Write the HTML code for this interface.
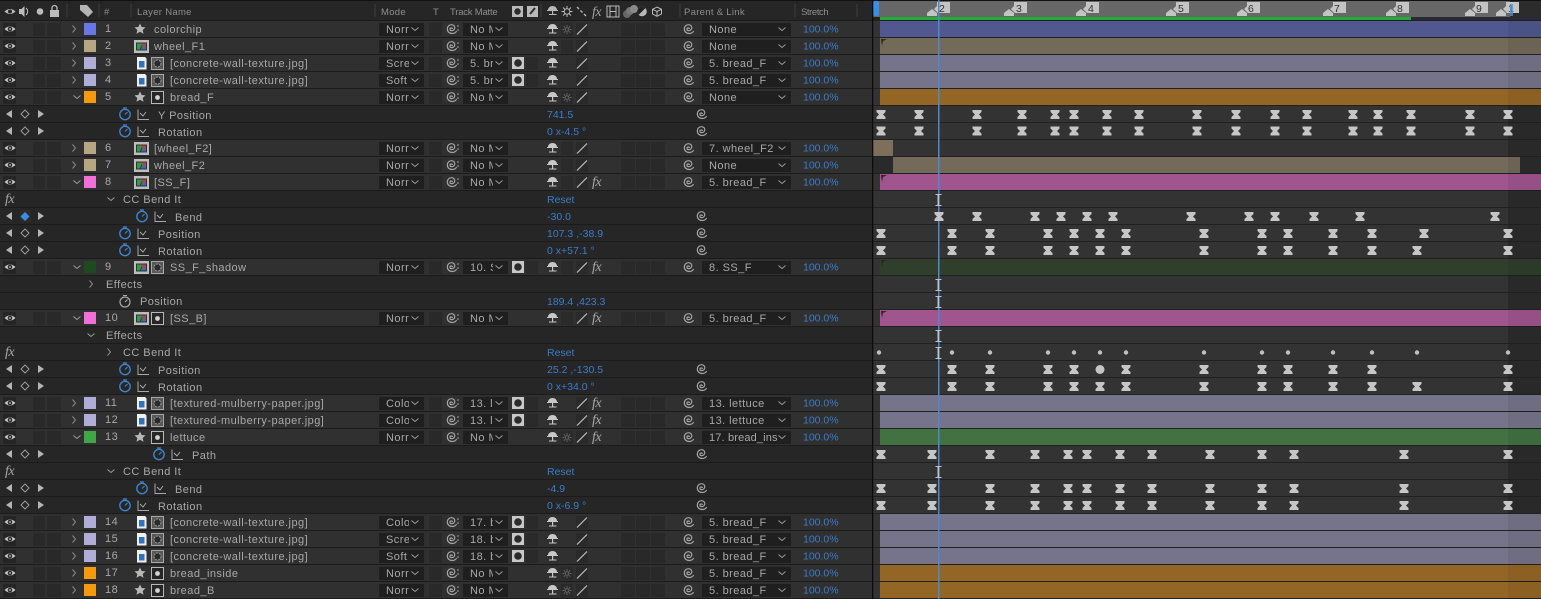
<!DOCTYPE html>
<html><head><meta charset="utf-8"><style>
html,body{margin:0;padding:0;background:#262626;width:1541px;height:599px;overflow:hidden}
svg{display:block;position:absolute;left:0;top:0}
text{font:11px "Liberation Sans",sans-serif;letter-spacing:.45px;fill:#a8a8a8}
.h{font-size:9.5px;fill:#8e8e8e;letter-spacing:.3px}
.b{fill:#3b7cc8;letter-spacing:0;font-size:10.5px}
.f{font:italic 14px "Liberation Serif",serif;fill:#a8a8a8;letter-spacing:-.5px}
.d{font-size:10.5px;fill:#333;letter-spacing:0}
</style></head><body>
<svg width="1541" height="599" viewBox="0 0 1541 599" xmlns="http://www.w3.org/2000/svg">
<defs>
<path id="sp" fill="none" stroke="#a4a4a4" stroke-width="1.200" d="M6.500 6a1.300 1.300 0 1 0-1.300 1.600c2 .3 3.600-1 3.600-3C8.800 2.800 7.100 1.700 5.500 1.700 3.100 1.700 1.300 3.600 1.300 6c0 3 2.500 4.500 5 4.500 2 0 3.500-1 4.300-2.500"/>
<g id="ch"><path d="M-3.500-1.500 0 1.500 3.500-1.500" fill="none" stroke="#9a9a9a"/></g>
<g id="cr"><path d="M-1.500-3.500 1.500 0-1.500 3.500" fill="none" stroke="#8a8a8a"/></g>
<g id="L">
<rect width="872" height="17" fill="#303030"/><rect width="872" height="1" fill="#1b1b1b"/>
<rect x="3" y="3" width="13" height="13" fill="#252525"/>
<path d="M4.500 9Q10 4 15.500 9 10 14 4.500 9z" fill="#c8c8c8"/><circle cx="10" cy="9" r="2.300" fill="#2a2a2a"/><circle cx="10" cy="9" r=".9" fill="#c8c8c8"/>
<rect x="33" y="3" width="12" height="13" fill="#292929"/><rect x="47" y="3" width="14" height="13" fill="#292929"/>
<rect x="379" y="3" width="45" height="13" fill="#1f1f1f"/><rect x="429" y="3" width="13" height="13" fill="#292929"/>
<use href="#sp" x="446" y="3"/><circle cx="458" cy="6" r=".8" fill="#aaa"/><circle cx="458" cy="10" r=".8" fill="#aaa"/>
<rect x="463" y="3" width="45" height="13" fill="#1f1f1f"/>
<path d="M548 8a4.500 4 0 0 1 9 0zM547 8h11v1h-11zM552 9h1.200v3.500H552zM549 12.500h7.500v1H549z" fill="#c8c8c8"/>
<rect x="576" y="3" width="12" height="13" fill="#2a2a2a"/><path d="M577 14.500 587 4.500" stroke="#c0c0c0" stroke-width="1.200"/>
<rect x="621" y="3" width="14" height="13" fill="#292929"/><rect x="636" y="3" width="14" height="13" fill="#292929"/><rect x="651" y="3" width="14" height="13" fill="#292929"/>
<use href="#sp" x="683" y="3"/>
<rect x="702" y="3" width="89" height="13" fill="#1f1f1f"/><use href="#ch" x="782" y="9"/>
</g>
<g id="C"><rect x="409" y="3" width="15" height="13" fill="#1f1f1f"/><use href="#ch" x="415" y="9"/><rect x="493" y="3" width="15" height="13" fill="#1f1f1f"/><use href="#ch" x="499" y="9"/></g>
<g id="P"><rect width="872" height="17" fill="#262626"/><rect width="872" height="1" fill="#1b1b1b"/></g>
<g id="A"><path d="M12 5v8L6 9zM38 5v8l6-4z" fill="#b4b4b4"/><path d="M25 5l4 4-4 4-4-4z" fill="none" stroke="#9a9a9a"/></g>
<g id="w"><circle cx="6" cy="7.500" r="5.200" fill="none" stroke="#3f82c8" stroke-width="1.400"/><path d="M4 1h4M6 7.500 8.500 5" stroke="#3f82c8" stroke-width="1.200"/></g>
<g id="g"><path d="M1 1.500V11.500H12M3 5l3 3 3-4" fill="none" stroke="#a8a8a8"/></g>
<g id="st"><rect x="561" y="3" width="12" height="13" fill="#2a2a2a"/><circle cx="567" cy="9.500" r="1.800" fill="none" stroke="#666"/><path d="M567 5v1.800M567 12.200V14M562.500 9.500h1.800M569.700 9.500h1.800M563.800 6.300l1.300 1.300M570.200 6.300l-1.300 1.300M563.800 12.700l1.300-1.300M570.200 12.700l-1.300-1.300" stroke="#666"/></g>
<rect id="cs" x="561" y="3" width="12" height="13" fill="#2a2a2a"/>
<g id="s"><path d="M140 3.500l1.700 3.500 3.800.4-2.800 2.600.8 3.800-3.500-2-3.500 2 .8-3.800-2.800-2.600 3.800-.4z" fill="#b8b8b8"/></g>
<g id="cp"><rect x="134" y="3" width="15" height="13" fill="#bdbdbd"/><rect x="136" y="5.500" width="11" height="8" fill="#333"/><path d="M137 6.500h5l-2 6h-3z" fill="#2e9a4a"/><path d="M141 6.500h5v3h-4z" fill="#b5443a"/><path d="M142 9.500h4v3h-5z" fill="#3a6ab8"/></g>
<g id="fl"><path d="M137 3h8l1.500 1.500V15.500H137z" fill="#f0f0f0"/><rect x="139" y="7" width="5.500" height="6.500" fill="#2f72c4"/></g>
<g id="mk"><rect x="151.500" y="3.500" width="12" height="12" fill="#585858" stroke="#a8a8a8"/><circle cx="157.500" cy="9.500" r="3.500" fill="#2a2a2a" stroke="#999" stroke-dasharray="2 1"/></g>
<g id="so"><rect x="151.500" y="3.500" width="12" height="12" fill="#262626" stroke="#b8b8b8"/><circle cx="157.500" cy="9.500" r="2.400" fill="#d4d4d4"/></g>
<g id="mb"><rect x="512" y="3" width="12" height="12" fill="#c8c8c8"/><circle cx="518" cy="9" r="3.800" fill="#2b2b2b"/><rect x="526" y="3" width="12" height="13" fill="#2a2a2a"/></g>
<g id="k"><path d="M-4.500-4.500h9v2L2 0l2.500 2.500v2h-9v-2L-2 0l-2.500-2.500z" fill="#c6c6c6"/></g>
<g id="I"><path d="M935.500 194.500h6M935.500 205.500h6" stroke="#b6c4d2" fill="none"/><rect x="937.500" y="194.500" width="1.800" height="11" fill="#b6c4d2"/></g>
<g id="d"><circle r="2.200" fill="#c0c0c0"/></g>
<g id="m"><path d="M-5 16v-3l5-4 5 4v3z" fill="#c4c4c4"/><path d="M2 9 5 6V2h13v11H6z" fill="#c4c4c4"/></g>
<g id="kA"><use href="#k" x="881"/><use href="#k" x="919"/><use href="#k" x="977"/><use href="#k" x="1022"/><use href="#k" x="1055"/><use href="#k" x="1074"/><use href="#k" x="1107"/><use href="#k" x="1139"/><use href="#k" x="1197"/><use href="#k" x="1236"/><use href="#k" x="1275"/><use href="#k" x="1307"/><use href="#k" x="1353"/><use href="#k" x="1378"/><use href="#k" x="1411"/><use href="#k" x="1470"/><use href="#k" x="1508"/></g>
<g id="kB"><use href="#k" x="881"/><use href="#k" x="952"/><use href="#k" x="990"/><use href="#k" x="1048"/><use href="#k" x="1074"/><use href="#k" x="1126"/><use href="#k" x="1204"/><use href="#k" x="1262"/><use href="#k" x="1288"/><use href="#k" x="1333"/><use href="#k" x="1372"/><use href="#k" x="1508"/></g>
<g id="kC"><use href="#k" x="881"/><use href="#k" x="932"/><use href="#k" x="990"/><use href="#k" x="1035"/><use href="#k" x="1068"/><use href="#k" x="1087"/><use href="#k" x="1120"/><use href="#k" x="1152"/><use href="#k" x="1210"/><use href="#k" x="1262"/><use href="#k" x="1294"/><use href="#k" x="1404"/><use href="#k" x="1508"/></g>
</defs>

<!-- header -->
<rect width="1541" height="20" fill="#262626"/>
<rect width="1541" height="1" fill="#111"/>
<path d="M4.500 11.500Q10 6.500 15.500 11.500 10 16.500 4.500 11.500z" fill="#bcbcbc"/><circle cx="10" cy="11.500" r="2" fill="#262626"/>
<path d="M19 9h2.500l3-3v11l-3-3H19z" fill="#bcbcbc"/><path d="M26 8a4.500 4.500 0 0 1 0 7" fill="none" stroke="#bcbcbc"/>
<circle cx="40" cy="11.500" r="3.300" fill="#bcbcbc"/>
<rect x="50" y="10" width="9" height="7" fill="#bcbcbc"/><path d="M52 10V8a2.500 2.500 0 0 1 5 0V10" fill="none" stroke="#bcbcbc" stroke-width="1.300"/>
<path d="M80 5h7l6 7-5 5-8-7z" fill="#b4b4b4"/>
<path d="M67 4v13M99 4v13M131 4v13M375 4v13M680 4v13M795 4v13M857 4v13M541 4v13" stroke="#3e3e3e"/>
<text class="h" x="104" y="15">#</text><text class="h" x="137" y="15">Layer Name</text><text class="h" x="381" y="15">Mode</text><text class="h" x="433" y="15">T</text><text class="h" x="450" y="15" textLength="48">Track Matte</text><text class="h" x="684" y="15">Parent &amp; Link</text><text class="h" x="801" y="15" textLength="28">Stretch</text>
<rect x="512" y="6" width="11" height="11" fill="#b8b8b8"/><circle cx="517.500" cy="11.500" r="3.200" fill="#2b2b2b"/>
<rect x="527" y="6" width="11" height="11" fill="#b8b8b8"/><path d="M530 14l5-6" stroke="#2b2b2b" stroke-width="2"/>
<path d="M548 10a4.500 4 0 0 1 9 0zM547 10h11v1h-11zM552 11h1.200v3H552zM549 14h7.500v1H549z" fill="#b8b8b8"/>
<circle cx="567" cy="11.500" r="2.800" fill="none" stroke="#b8b8b8"/><path d="M567 6v2.500M567 14.500V17M561.500 11.500H564M570 11.500h2.500M563 7.500l2 2M571 7.500l-2 2M563 15.500l2-2M571 15.500l-2-2" stroke="#b8b8b8"/>
<path d="M577 7l2 2M580.500 10.500l2 2M584 14l2 2" stroke="#b8b8b8" stroke-width="1.300"/>
<text class="f" x="592" y="16" style="fill:#a0a0a0">fx</text>
<rect x="607" y="6" width="12" height="11" fill="none" stroke="#b8b8b8"/><path d="M610 6.500v10M616 6.500v10M610 11.500h6" stroke="#b8b8b8"/>
<circle cx="627" cy="14" r="4" fill="#666"/><circle cx="630" cy="11" r="4" fill="#777"/><circle cx="634" cy="9" r="4" fill="#8a8a8a"/>
<circle cx="642" cy="11.500" r="4.800" fill="#b8b8b8"/><path d="M642 6.700a4.800 4.800 0 0 0 0 9.600z" fill="#222" transform="rotate(45 642 11.500)"/>
<path d="M657 7l4.500 2.300v4.700L657 16.300 652.500 14V9.300zM652.500 9.300 657 11.500l4.500-2.200M657 11.500v4.800" fill="none" stroke="#b8b8b8"/>

<!-- timeline -->
<rect x="873" y="1" width="637" height="16" fill="#676767"/>
<rect x="1510" y="1" width="31" height="16" fill="#2c2c2c"/>
<rect x="873" y="17" width="7" height="3" fill="#222"/>
<rect x="880" y="17" width="531" height="3" fill="#22ae36"/>
<rect x="1411" y="17" width="130" height="3" fill="#2a2a32"/>
<rect x="873" y="1" width="6" height="15" rx="2" fill="#3a8ee6"/>
<use href="#m" x="932"/><use href="#m" x="1009"/><use href="#m" x="1081"/><use href="#m" x="1171"/><use href="#m" x="1242"/><use href="#m" x="1328"/><use href="#m" x="1391"/><use href="#m" x="1470"/><use href="#m" x="1501"/>
<text class="d" x="939" y="12">2</text><text class="d" x="1016" y="12">3</text><text class="d" x="1088" y="12">4</text><text class="d" x="1178" y="12">5</text><text class="d" x="1248" y="12">6</text><text class="d" x="1334" y="12">7</text><text class="d" x="1397" y="12">8</text><text class="d" x="1476" y="12">9</text><text class="d" x="1508" y="12">1</text>
<rect x="1510" y="4" width="3" height="12" fill="#4a90d8" opacity=".8"/>

<rect x="873" y="20" width="668" height="579" fill="#333"/>
<path d="M873 20.500H1541M873 37.500H1541M873 54.500H1541M873 71.500H1541M873 88.500H1541M873 105.500H1541M873 122.500H1541M873 139.500H1541M873 156.500H1541M873 173.500H1541M873 190.500H1541M873 207.500H1541M873 224.500H1541M873 241.500H1541M873 258.500H1541M873 275.500H1541M873 292.500H1541M873 309.500H1541M873 326.500H1541M873 343.500H1541M873 360.500H1541M873 377.500H1541M873 394.500H1541M873 411.500H1541M873 428.500H1541M873 445.500H1541M873 462.500H1541M873 479.500H1541M873 496.500H1541M873 513.500H1541M873 530.500H1541M873 547.500H1541M873 564.500H1541M873 581.500H1541M873 598.500H1541" stroke="#212121"/>
<g fill="#2c2c2c"><rect x="1508" y="106" width="33" height="16"/><rect x="1508" y="123" width="33" height="16"/><rect x="1508" y="140" width="33" height="16"/><rect x="1520" y="157" width="21" height="16"/>
<rect x="1508" y="191" width="33" height="16"/><rect x="1508" y="208" width="33" height="16"/><rect x="1508" y="225" width="33" height="16"/><rect x="1508" y="242" width="33" height="16"/>
<rect x="1508" y="276" width="33" height="16"/><rect x="1508" y="293" width="33" height="16"/>
<rect x="1508" y="327" width="33" height="16"/><rect x="1508" y="344" width="33" height="16"/><rect x="1508" y="361" width="33" height="16"/><rect x="1508" y="378" width="33" height="16"/>
<rect x="1508" y="446" width="33" height="16"/><rect x="1508" y="463" width="33" height="16"/><rect x="1508" y="480" width="33" height="16"/><rect x="1508" y="497" width="33" height="16"/></g>
<g fill="#50588f"><rect x="880" y="21" width="661" height="16"/></g>
<g fill="#736a5a"><rect x="880" y="38" width="661" height="16"/><rect x="893" y="157" width="627" height="16"/></g>
<rect x="873" y="140" width="20" height="16" fill="#7d6f5c"/>
<g fill="#75748a"><rect x="880" y="55" width="661" height="16"/><rect x="880" y="72" width="661" height="16"/><rect x="880" y="395" width="661" height="16"/><rect x="880" y="412" width="661" height="16"/><rect x="880" y="514" width="661" height="16"/><rect x="880" y="531" width="661" height="16"/><rect x="880" y="548" width="661" height="16"/></g>
<g fill="#946625"><rect x="880" y="89" width="661" height="16"/><rect x="880" y="565" width="661" height="16"/><rect x="880" y="582" width="661" height="16"/></g>
<g fill="#a0558f"><rect x="880" y="174" width="661" height="16"/><rect x="880" y="310" width="661" height="16"/></g>
<rect x="880" y="259" width="661" height="16" fill="#2f3f2c"/>
<rect x="880" y="429" width="661" height="16" fill="#427241"/>
<rect x="873" y="157" width="20" height="16" fill="#2a2a2a"/>
<rect x="1508" y="20" width="33" height="579" fill="#000" opacity=".06"/>
<path d="M881 39h6l-4 2-1 5zM881 175h6l-4 2-1 5zM881 260h6l-4 2-1 5zM881 311h6l-4 2-1 5z" fill="#2f2620"/>
<rect x="872" y="0" width="1.300" height="599" fill="#0c0c0c"/>

<use href="#kA" y="114.500"/><use href="#kA" y="131"/>
<rect x="938" y="0" width="1.500" height="599" fill="#4a8ad0"/>
<g transform="translate(0,216.500)"><use href="#k" x="939"/><use href="#k" x="977"/><use href="#k" x="1035"/><use href="#k" x="1061"/><use href="#k" x="1087"/><use href="#k" x="1113"/><use href="#k" x="1191"/><use href="#k" x="1249"/><use href="#k" x="1275"/><use href="#k" x="1314"/><use href="#k" x="1360"/><use href="#k" x="1495"/></g>
<use href="#kB" y="233.500"/><use href="#k" x="1100" y="233.500"/><use href="#k" x="1424" y="233.500"/>
<use href="#kB" y="250.500"/><use href="#k" x="1100" y="250.500"/><use href="#k" x="1417" y="250.500"/>
<g transform="translate(0,352.500)"><use href="#d" x="879"/><use href="#d" x="952"/><use href="#d" x="990"/><use href="#d" x="1048"/><use href="#d" x="1074"/><use href="#d" x="1100"/><use href="#d" x="1126"/><use href="#d" x="1204"/><use href="#d" x="1262"/><use href="#d" x="1288"/><use href="#d" x="1333"/><use href="#d" x="1372"/><use href="#d" x="1417"/><use href="#d" x="1508"/></g>
<use href="#kB" y="369.500"/><circle cx="1100" cy="369.500" r="4.500" fill="#c4c4c4"/>
<use href="#kB" y="386.500"/><use href="#k" x="1100" y="386.500"/><use href="#k" x="1417" y="386.500"/>
<use href="#kC" y="454.500"/><use href="#kC" y="488.500"/><use href="#kC" y="505.500"/>
<use href="#I"/><use href="#I" y="85"/><use href="#I" y="102"/><use href="#I" y="136"/><use href="#I" y="153"/><use href="#I" y="272"/>

<!-- layers -->
<g transform="translate(0,20)"><use href="#L"/><use href="#cr" x="74" y="9"/><rect x="84" y="3" width="12" height="12" fill="#6a76e8"/><text x="105" y="12">1</text><use href="#s"/><text x="154" y="13">colorchip</text><text x="386" y="13">Norr</text><text x="470" y="13">No M</text><use href="#C"/><use href="#st"/><text x="709" y="13">None</text><text class="b" x="803" y="12.500">100.0%</text></g>
<g transform="translate(0,37)"><use href="#L"/><use href="#cr" x="74" y="9"/><rect x="84" y="3" width="12" height="12" fill="#b8a582"/><text x="105" y="12">2</text><use href="#cp"/><text x="154" y="13">wheel_F1</text><text x="386" y="13">Norr</text><text x="470" y="13">No M</text><use href="#C"/><use href="#cs"/><text x="709" y="13">None</text><text class="b" x="803" y="12.500">100.0%</text></g>
<g transform="translate(0,54)"><use href="#L"/><use href="#cr" x="74" y="9"/><rect x="84" y="3" width="12" height="12" fill="#b0aed8"/><text x="105" y="12">3</text><use href="#fl"/><use href="#mk"/><text x="170" y="13">[concrete-wall-texture.jpg]</text><text x="386" y="13">Scre</text><text x="470" y="13">5. bre</text><use href="#C"/><use href="#mb"/><text x="709" y="13">5. bread_F</text><text class="b" x="803" y="12.500">100.0%</text></g>
<g transform="translate(0,71)"><use href="#L"/><use href="#cr" x="74" y="9"/><rect x="84" y="3" width="12" height="12" fill="#b0aed8"/><text x="105" y="12">4</text><use href="#fl"/><use href="#mk"/><text x="170" y="13">[concrete-wall-texture.jpg]</text><text x="386" y="13">Soft</text><text x="470" y="13">5. bre</text><use href="#C"/><use href="#mb"/><text x="709" y="13">5. bread_F</text><text class="b" x="803" y="12.500">100.0%</text></g>
<g transform="translate(0,88)"><use href="#L"/><use href="#ch" x="77" y="9"/><rect x="84" y="3" width="12" height="12" fill="#f59a0f"/><text x="105" y="12">5</text><use href="#s"/><use href="#so"/><text x="170" y="13">bread_F</text><text x="386" y="13">Norr</text><text x="470" y="13">No M</text><use href="#C"/><use href="#st"/><text x="709" y="13">None</text><text class="b" x="803" y="12.500">100.0%</text></g>
<g transform="translate(0,105)"><use href="#P"/><use href="#A"/><use href="#w" x="119" y="2"/><use href="#g" x="137" y="3"/><text x="158" y="14">Y Position</text><text class="b" x="547" y="13">741.5</text><use href="#sp" x="696" y="3"/></g>
<g transform="translate(0,122)"><use href="#P"/><use href="#A"/><use href="#w" x="119" y="2"/><use href="#g" x="137" y="3"/><text x="158" y="14">Rotation</text><text class="b" x="547" y="13">0 x-4.5 °</text><use href="#sp" x="696" y="3"/></g>
<g transform="translate(0,139)"><use href="#L"/><use href="#cr" x="74" y="9"/><rect x="84" y="3" width="12" height="12" fill="#b8a582"/><text x="105" y="12">6</text><use href="#cp"/><text x="154" y="13">[wheel_F2]</text><text x="386" y="13">Norr</text><text x="470" y="13">No M</text><use href="#C"/><use href="#cs"/><text x="709" y="13">7. wheel_F2</text><text class="b" x="803" y="12.500">100.0%</text></g>
<g transform="translate(0,156)"><use href="#L"/><use href="#cr" x="74" y="9"/><rect x="84" y="3" width="12" height="12" fill="#b8a582"/><text x="105" y="12">7</text><use href="#cp"/><text x="154" y="13">wheel_F2</text><text x="386" y="13">Norr</text><text x="470" y="13">No M</text><use href="#C"/><use href="#cs"/><text x="709" y="13">None</text><text class="b" x="803" y="12.500">100.0%</text></g>
<g transform="translate(0,173)"><use href="#L"/><use href="#ch" x="77" y="9"/><rect x="84" y="3" width="12" height="12" fill="#f070d8"/><text x="105" y="12">8</text><use href="#cp"/><text x="154" y="13">[SS_F]</text><text x="386" y="13">Norr</text><text x="470" y="13">No M</text><use href="#C"/><use href="#cs"/><text class="f" x="592" y="13">fx</text><text x="709" y="13">5. bread_F</text><text class="b" x="803" y="12.500">100.0%</text></g>
<g transform="translate(0,190)"><use href="#P"/><text class="f" x="5" y="13">fx</text><use href="#ch" x="111" y="9"/><text x="123" y="13">CC Bend It</text><text class="b" x="547" y="13">Reset</text></g>
<g transform="translate(0,207)"><use href="#P"/><use href="#A"/><rect x="20" y="3" width="11" height="12" fill="#2e2a26"/><path d="M25 5l4.500 4.500L25 14l-4.500-4.500z" fill="#3a8ee6"/><use href="#w" x="136" y="2"/><use href="#g" x="154" y="3"/><text x="175" y="14">Bend</text><text class="b" x="547" y="13">-30.0</text><use href="#sp" x="696" y="3"/></g>
<g transform="translate(0,224)"><use href="#P"/><use href="#A"/><use href="#w" x="119" y="2"/><use href="#g" x="137" y="3"/><text x="158" y="14">Position</text><text class="b" x="547" y="13">107.3 ,-38.9</text><use href="#sp" x="696" y="3"/></g>
<g transform="translate(0,241)"><use href="#P"/><use href="#A"/><use href="#w" x="119" y="2"/><use href="#g" x="137" y="3"/><text x="158" y="14">Rotation</text><text class="b" x="547" y="13">0 x+57.1 °</text><use href="#sp" x="696" y="3"/></g>
<g transform="translate(0,258)"><use href="#L"/><use href="#ch" x="77" y="9"/><rect x="84" y="3" width="12" height="12" fill="#1d4a1f"/><text x="105" y="12">9</text><use href="#cp"/><use href="#mk"/><text x="170" y="13">SS_F_shadow</text><text x="386" y="13">Norr</text><text x="470" y="13">10. S</text><use href="#C"/><use href="#mb"/><use href="#cs"/><text class="f" x="592" y="13">fx</text><text x="709" y="13">8. SS_F</text><text class="b" x="803" y="12.500">100.0%</text></g>
<g transform="translate(0,275)"><use href="#P"/><use href="#cr" x="91" y="9"/><text x="106" y="13">Effects</text></g>
<g transform="translate(0,292)"><use href="#P"/><circle cx="125" cy="10" r="5" fill="none" stroke="#a8a8a8" stroke-width="1.200"/><path d="M123 3.500h4M125 10l2.500-2.500" stroke="#a8a8a8"/><text x="140" y="13">Position</text><text class="b" x="547" y="13">189.4 ,423.3</text></g>
<g transform="translate(0,309)"><use href="#L"/><use href="#ch" x="77" y="9"/><rect x="84" y="3" width="12" height="12" fill="#f070d8"/><text x="105" y="12">10</text><use href="#cp"/><use href="#so"/><text x="170" y="13">[SS_B]</text><text x="386" y="13">Norr</text><text x="470" y="13">No M</text><use href="#C"/><use href="#cs"/><text class="f" x="592" y="13">fx</text><text x="709" y="13">5. bread_F</text><text class="b" x="803" y="12.500">100.0%</text></g>
<g transform="translate(0,326)"><use href="#P"/><use href="#ch" x="91" y="9"/><text x="106" y="13">Effects</text></g>
<g transform="translate(0,343)"><use href="#P"/><text class="f" x="5" y="13">fx</text><use href="#cr" x="109" y="9"/><text x="123" y="13">CC Bend It</text><text class="b" x="547" y="13">Reset</text></g>
<g transform="translate(0,360)"><use href="#P"/><use href="#A"/><use href="#w" x="119" y="2"/><use href="#g" x="137" y="3"/><text x="158" y="14">Position</text><text class="b" x="547" y="13">25.2 ,-130.5</text><use href="#sp" x="696" y="3"/></g>
<g transform="translate(0,377)"><use href="#P"/><use href="#A"/><use href="#w" x="119" y="2"/><use href="#g" x="137" y="3"/><text x="158" y="14">Rotation</text><text class="b" x="547" y="13">0 x+34.0 °</text><use href="#sp" x="696" y="3"/></g>
<g transform="translate(0,394)"><use href="#L"/><use href="#cr" x="74" y="9"/><rect x="84" y="3" width="12" height="12" fill="#b0aed8"/><text x="105" y="12">11</text><use href="#fl"/><use href="#mk"/><text x="170" y="13">[textured-mulberry-paper.jpg]</text><text x="386" y="13">Colo</text><text x="470" y="13">13. le</text><use href="#C"/><use href="#mb"/><text class="f" x="592" y="13">fx</text><text x="709" y="13">13. lettuce</text><text class="b" x="803" y="12.500">100.0%</text></g>
<g transform="translate(0,411)"><use href="#L"/><use href="#cr" x="74" y="9"/><rect x="84" y="3" width="12" height="12" fill="#b0aed8"/><text x="105" y="12">12</text><use href="#fl"/><use href="#mk"/><text x="170" y="13">[textured-mulberry-paper.jpg]</text><text x="386" y="13">Colo</text><text x="470" y="13">13. le</text><use href="#C"/><use href="#mb"/><text class="f" x="592" y="13">fx</text><text x="709" y="13">13. lettuce</text><text class="b" x="803" y="12.500">100.0%</text></g>
<g transform="translate(0,428)"><use href="#L"/><use href="#ch" x="77" y="9"/><rect x="84" y="3" width="12" height="12" fill="#3fa844"/><text x="105" y="12">13</text><use href="#s"/><use href="#so"/><text x="170" y="13">lettuce</text><text x="386" y="13">Norr</text><text x="470" y="13">No M</text><use href="#C"/><use href="#st"/><text class="f" x="592" y="13">fx</text><text x="709" y="13" textLength="69">17. bread_ins</text><text class="b" x="803" y="12.500">100.0%</text></g>
<g transform="translate(0,445)"><use href="#P"/><use href="#A"/><use href="#w" x="153" y="2"/><use href="#g" x="171" y="3"/><text x="192" y="14">Path</text><use href="#sp" x="696" y="3"/></g>
<g transform="translate(0,462)"><use href="#P"/><text class="f" x="5" y="13">fx</text><use href="#ch" x="111" y="9"/><text x="123" y="13">CC Bend It</text><text class="b" x="547" y="13">Reset</text></g>
<g transform="translate(0,479)"><use href="#P"/><use href="#A"/><use href="#w" x="136" y="2"/><use href="#g" x="154" y="3"/><text x="175" y="14">Bend</text><text class="b" x="547" y="13">-4.9</text><use href="#sp" x="696" y="3"/></g>
<g transform="translate(0,496)"><use href="#P"/><use href="#A"/><use href="#w" x="119" y="2"/><use href="#g" x="137" y="3"/><text x="158" y="14">Rotation</text><text class="b" x="547" y="13">0 x-6.9 °</text><use href="#sp" x="696" y="3"/></g>
<g transform="translate(0,513)"><use href="#L"/><use href="#cr" x="74" y="9"/><rect x="84" y="3" width="12" height="12" fill="#b0aed8"/><text x="105" y="12">14</text><use href="#fl"/><use href="#mk"/><text x="170" y="13">[concrete-wall-texture.jpg]</text><text x="386" y="13">Colo</text><text x="470" y="13">17. b</text><use href="#C"/><use href="#mb"/><text x="709" y="13">5. bread_F</text><text class="b" x="803" y="12.500">100.0%</text></g>
<g transform="translate(0,530)"><use href="#L"/><use href="#cr" x="74" y="9"/><rect x="84" y="3" width="12" height="12" fill="#b0aed8"/><text x="105" y="12">15</text><use href="#fl"/><use href="#mk"/><text x="170" y="13">[concrete-wall-texture.jpg]</text><text x="386" y="13">Scre</text><text x="470" y="13">18. b</text><use href="#C"/><use href="#mb"/><text x="709" y="13">5. bread_F</text><text class="b" x="803" y="12.500">100.0%</text></g>
<g transform="translate(0,547)"><use href="#L"/><use href="#cr" x="74" y="9"/><rect x="84" y="3" width="12" height="12" fill="#b0aed8"/><text x="105" y="12">16</text><use href="#fl"/><use href="#mk"/><text x="170" y="13">[concrete-wall-texture.jpg]</text><text x="386" y="13">Soft</text><text x="470" y="13">18. b</text><use href="#C"/><use href="#mb"/><text x="709" y="13">5. bread_F</text><text class="b" x="803" y="12.500">100.0%</text></g>
<g transform="translate(0,564)"><use href="#L"/><use href="#cr" x="74" y="9"/><rect x="84" y="3" width="12" height="12" fill="#f59a0f"/><text x="105" y="12">17</text><use href="#s"/><use href="#so"/><text x="170" y="13">bread_inside</text><text x="386" y="13">Norr</text><text x="470" y="13">No M</text><use href="#C"/><use href="#st"/><text x="709" y="13">5. bread_F</text><text class="b" x="803" y="12.500">100.0%</text></g>
<g transform="translate(0,581)"><use href="#L"/><use href="#cr" x="74" y="9"/><rect x="84" y="3" width="12" height="12" fill="#f59a0f"/><text x="105" y="12">18</text><use href="#s"/><use href="#so"/><text x="170" y="13">bread_B</text><text x="386" y="13">Norr</text><text x="470" y="13">No M</text><use href="#C"/><use href="#st"/><text x="709" y="13">5. bread_F</text><text class="b" x="803" y="12.500">100.0%</text></g>
<rect y="598" width="872" height="1" fill="#1b1b1b"/>
</svg>
</body></html>
